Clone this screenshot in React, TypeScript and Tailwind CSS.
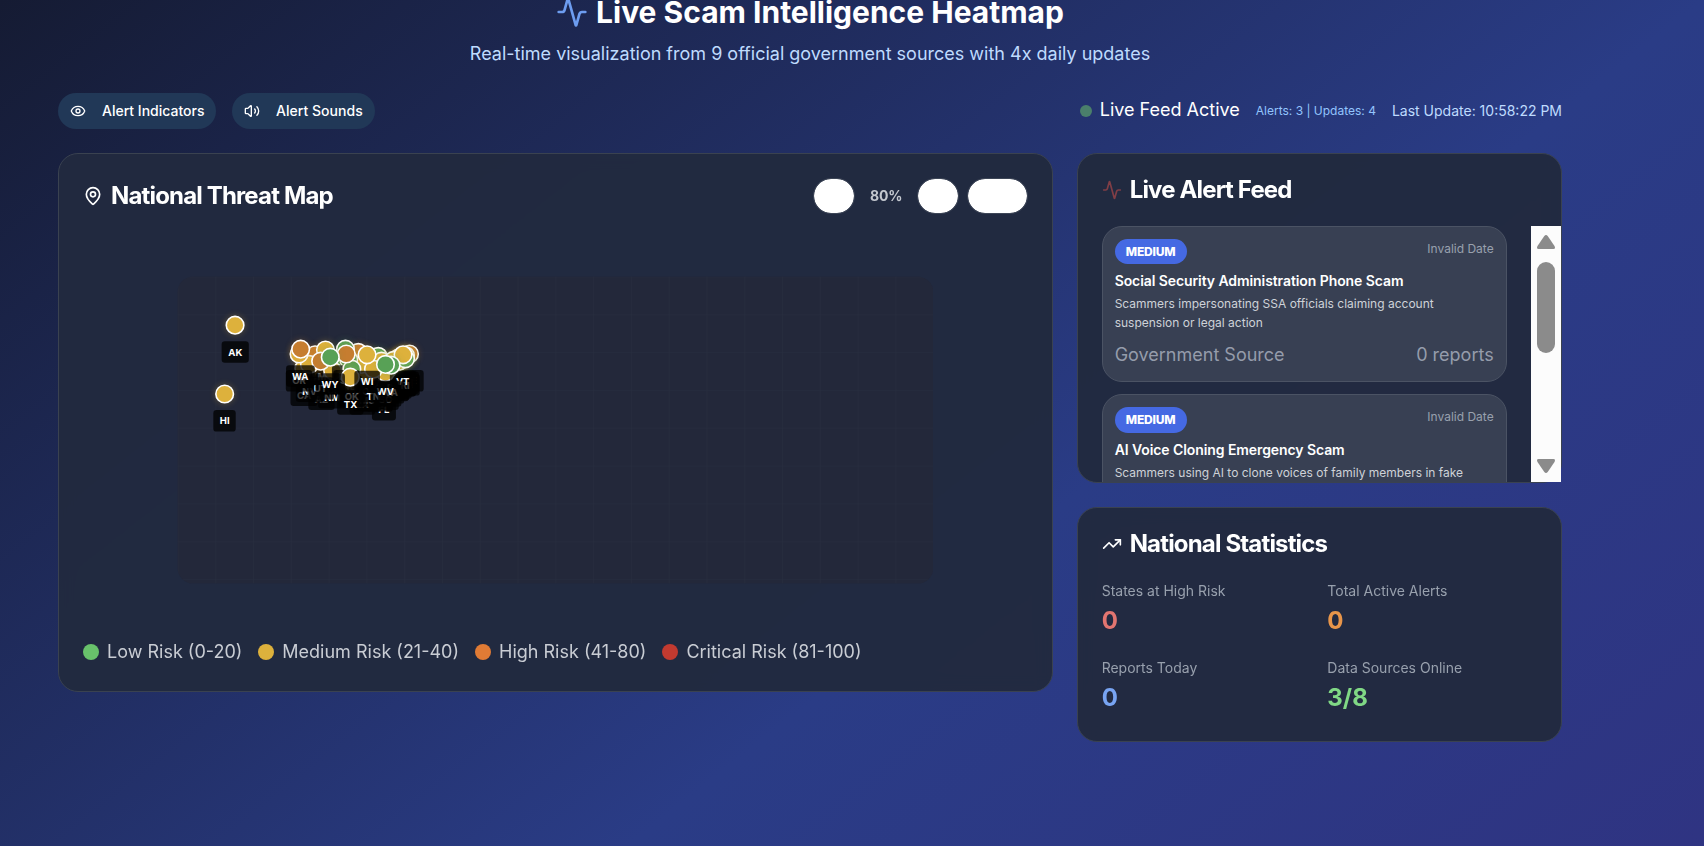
import { Activity, Eye, MapPin, TrendingUp, Volume2 } from "lucide-react";

type Level = "low" | "medium" | "high";

const L: Level = "low";
const M: Level = "medium";
const H: Level = "high";

const states: [string, number, number, Level][] = [
  ["AL", 32.806671, -86.79113, M],
  ["AK", 61.370716, -152.404419, M],
  ["AZ", 33.729759, -111.431221, M],
  ["AR", 34.969704, -92.373123, L],
  ["CA", 36.116203, -119.681564, M],
  ["CO", 39.059811, -105.311104, L],
  ["CT", 41.597782, -72.755371, M],
  ["DE", 39.318523, -75.507141, M],
  ["FL", 27.766279, -81.686783, M],
  ["GA", 33.040619, -83.643074, M],
  ["HI", 21.094318, -157.498337, M],
  ["ID", 44.240459, -114.478828, H],
  ["IL", 40.349457, -88.986137, M],
  ["IN", 39.849426, -86.258278, M],
  ["IA", 42.011539, -93.210526, L],
  ["KS", 38.5266, -96.726486, L],
  ["KY", 37.66814, -84.670067, M],
  ["LA", 31.169546, -91.867805, M],
  ["ME", 44.693947, -69.381927, H],
  ["MD", 39.063946, -76.802101, M],
  ["MA", 42.230171, -71.530106, L],
  ["MI", 43.326618, -84.536095, L],
  ["MN", 45.694454, -93.900192, H],
  ["MS", 32.741646, -89.678696, M],
  ["MO", 38.456085, -92.288368, M],
  ["MT", 46.921925, -109.6, M],
  ["NE", 41.12537, -98.268082, L],
  ["NV", 38.313515, -117.055374, M],
  ["NH", 43.452492, -71.563896, M],
  ["NJ", 40.298904, -74.521011, M],
  ["NM", 34.840515, -106.248482, M],
  ["NY", 42.165726, -74.948051, M],
  ["NC", 35.630066, -79.806419, M],
  ["ND", 47.528912, -99.784012, L],
  ["OH", 40.388783, -82.764915, M],
  ["OK", 35.565342, -96.928917, L],
  ["OR", 44.572021, -122.070938, M],
  ["PA", 40.590752, -77.209755, M],
  ["RI", 41.680893, -71.51178, L],
  ["SC", 33.856892, -80.945007, M],
  ["SD", 44.299782, -99.438828, H],
  ["TN", 35.747845, -86.692345, M],
  ["TX", 31.054487, -97.563461, M],
  ["UT", 40.150032, -111.862434, H],
  ["VT", 44.045876, -72.710686, M],
  ["VA", 37.769337, -78.169968, L],
  ["WA", 47.400902, -121.490494, H],
  ["WV", 38.491226, -80.954453, L],
  ["WI", 44.268543, -89.616508, M],
  ["WY", 42.755966, -107.30249, L],
];

const dotStyle: Record<Level, string> = {
  low: "bg-[#58a156] shadow-[0_0_8px_rgba(88,161,86,0.25)]",
  medium: "bg-[#ddb13c] shadow-[0_0_8px_rgba(221,177,60,0.3)]",
  high: "bg-[#c67d30] shadow-[0_0_8px_rgba(198,125,48,0.3)]",
};

const card = "rounded-[20px] border border-[#3a4250] bg-[#222a3f]/98 backdrop-blur-sm";
const cardTitle = "flex items-center gap-2 text-2xl font-bold tracking-[-0.84px]";

function StateMarker({ code, lat, lon, level }: { code: string; lat: number; lon: number; level: Level }) {
  return (
    <div
      className="absolute size-6 -translate-x-1/2 -translate-y-1/2"
      style={{ left: `${((lon + 180) / 360) * 100}%`, top: `${((90 - lat) / 180) * 100}%` }}
    >
      <div className={`size-6 rounded-full border-2 border-white ${dotStyle[level]}`} />
      <div className="absolute top-full left-1/2 mt-2 -translate-x-1/2 rounded bg-black/75 px-2 py-1 text-xs leading-[19.2px] font-bold whitespace-nowrap text-white">
        {code}
      </div>
    </div>
  );
}

function Legend({ color, label }: { color: string; label: string }) {
  return (
    <div className="flex items-center gap-2">
      <div className={`size-4 rounded-full ${color}`} />
      <span>{label}</span>
    </div>
  );
}

function Alert({ title, body }: { title: string; body: string }) {
  return (
    <div className="mb-3 h-[156.4px] w-[405px] shrink-0 rounded-[20px] border border-[#4b5364] bg-[#384053] p-3">
      <div className="flex items-start justify-between">
        <span className="flex h-[25.2px] w-[72px] items-center justify-center rounded-full bg-[#4569e3] text-xs font-extrabold tracking-[-0.2px] text-white">
          MEDIUM
        </span>
        <span className="text-xs leading-[19px] text-[#98a0ae]">Invalid Date</span>
      </div>
      <h4 className="mt-[7px] text-sm leading-5 font-semibold tracking-[-0.085px] text-white">{title}</h4>
      <p className="mt-[3px] h-[38px] text-xs leading-[19px] text-[#ced2d8]">{body}</p>
      <div className="mt-[9px] flex justify-between text-[18px] leading-7 text-[#959cab]">
        <span>Government Source</span>
        <span>0 reports</span>
      </div>
    </div>
  );
}

function Stat({ label, value, color }: { label: string; value: string; color: string }) {
  return (
    <div>
      <div className="pt-px text-sm leading-[22px] text-[#98a0ad]">{label}</div>
      <div className={`mt-px text-2xl leading-9 font-bold ${color}`}>{value}</div>
    </div>
  );
}

export default function App() {
  return (
    <div className="h-[846px] overflow-hidden bg-[linear-gradient(to_bottom_right,#151b33_0%,#2a3c86_50%,#322f80_100%)] bg-[length:1704px_1340px] bg-no-repeat pl-[58px] font-[Inter,sans-serif] text-white">
      <div className="w-[1504px]">
        <header className="flex h-[93px] flex-col items-center">
          <h1 className="-mt-[6px] flex h-9 items-center gap-2 text-[30px] leading-9 font-bold">
            <Activity className="size-8 text-[#6d9df0]" />
            Live Scam Intelligence Heatmap
          </h1>
          <p className="mt-[10px] text-[18px] leading-7 text-[#bfdbfe]">
            Real-time visualization from 9 official government sources with 4x daily updates
          </p>
        </header>

        <div className="flex h-9 items-center justify-between">
          <div className="flex gap-4 text-sm font-medium">
            <button className="flex h-9 w-[158px] items-center gap-4 rounded-full bg-[#213857] pl-3">
              <Eye className="size-4" />
              Alert Indicators
            </button>
            <button className="flex h-9 w-[143px] items-center gap-4 rounded-full bg-[#213857] pl-3 tracking-[0.03px]">
              <Volume2 className="size-4" />
              Alert Sounds
            </button>
          </div>
          <div className="flex items-center gap-4">
            <div className="flex items-center gap-2 text-[18px] leading-7">
              <div className="size-3 rounded-full bg-[#4a7f6b]" />
              <span className="pb-0.5">Live Feed Active</span>
            </div>
            <span className="text-xs text-[#93c5fd]">Alerts: 3 | Updates: 4</span>
            <span className="text-sm text-[#bfdbfe]">Last Update: 10:58:22 PM</span>
          </div>
        </div>

        <div className="mt-6 grid grid-cols-3 items-start gap-6">
          <section className={`col-span-2 h-[538.6px] p-6 ${card}`}>
            <div className="flex h-9 items-center justify-between">
              <h2 className={cardTitle}>
                <MapPin className="size-5" />
                National Threat Map
              </h2>
              <div className="flex items-center">
                <div className="h-9 w-[42px] rounded-full border border-[#3d4657] bg-white bg-clip-padding" />
                <span className="w-[62px] pl-px text-center text-sm font-bold tracking-[-0.1px] text-[#c3c7ce]">80%</span>
                <div className="h-9 w-[42px] rounded-full border border-[#3d4657] bg-white bg-clip-padding" />
                <div className="ml-2 h-9 w-[61px] rounded-full border border-[#3d4657] bg-white bg-clip-padding" />
              </div>
            </div>
            <div className="mt-6 h-96">
              <div className="relative h-96 scale-[0.8] overflow-hidden rounded-[20px] bg-[#23283a]">
                <svg className="absolute inset-0 size-full" viewBox="0 0 1000 406" preserveAspectRatio="none">
                  <defs>
                    <pattern id="grid" width="50" height="50" patternUnits="userSpaceOnUse">
                      <path d="M50 0H0V50" fill="none" stroke="#282e40" strokeWidth="1.4" />
                    </pattern>
                  </defs>
                  <rect width="1000" height="406" fill="url(#grid)" />
                </svg>
                {states.map(([code, lat, lon, level]) => (
                  <StateMarker key={code} code={code} lat={lat} lon={lon} level={level} />
                ))}
              </div>
            </div>
            <div className="mt-4 flex h-7 items-center gap-4 text-[18px] leading-7 text-[#c9cdd4]">
              <Legend color="bg-[#68c26b]" label="Low Risk (0-20)" />
              <Legend color="bg-[#ddb13c]" label="Medium Risk (21-40)" />
              <Legend color="bg-[#e07b35]" label="High Risk (41-80)" />
              <Legend color="bg-[#c23a30]" label="Critical Risk (81-100)" />
            </div>
          </section>

          <div className="flex flex-col gap-6">
            <section className={`flex h-[330px] flex-col ${card}`}>
              <h2 className={`h-[72px] shrink-0 pl-6 ${cardTitle}`}>
                <Activity className="size-5 text-[#803e46]" />
                Live Alert Feed
              </h2>
              <div className="flex h-[256px] justify-between">
                <div className="flex h-full flex-col overflow-hidden pl-6">
                  <Alert
                    title="Social Security Administration Phone Scam"
                    body="Scammers impersonating SSA officials claiming account suspension or legal action"
                  />
                  <Alert
                    title="AI Voice Cloning Emergency Scam"
                    body="Scammers using AI to clone voices of family members in fake emergencies"
                  />
                </div>
                <div className="flex w-[30px] flex-col items-center bg-[#fcfcfc] py-[9px]">
                  <svg className="h-[14px] w-[18px]" viewBox="0 0 18 14" fill="#8b8b8b">
                    <path d="M7.3 1Q9-1 10.7 1L17.5 11Q18.8 14 16.5 14H1.5Q-.8 14 .5 11Z" />
                  </svg>
                  <div className="mt-[13px] h-[91px] w-[18px] rounded-full bg-[#8b8b8b]" />
                  <svg className="mt-auto h-[14px] w-[18px]" viewBox="0 0 18 14" fill="#8b8b8b">
                    <path d="M7.3 13Q9 15 10.7 13L17.5 3Q18.8 0 16.5 0H1.5Q-.8 0 .5 3Z" />
                  </svg>
                </div>
              </div>
            </section>

            <section className={`h-[234.6px] px-6 ${card}`}>
              <h2 className={`h-[71px] ${cardTitle}`}>
                <TrendingUp className="size-5" />
                National Statistics
              </h2>
              <div className="grid grid-cols-2 gap-x-4 gap-y-[17px]">
                <Stat label="States at High Risk" value="0" color="text-[#e27570]" />
                <Stat label="Total Active Alerts" value="0" color="text-[#e8954a]" />
                <Stat label="Reports Today" value="0" color="text-[#78a4f2]" />
                <Stat label="Data Sources Online" value="3/8" color="text-[#80d885]" />
              </div>
            </section>
          </div>
        </div>
      </div>
    </div>
  );
}
